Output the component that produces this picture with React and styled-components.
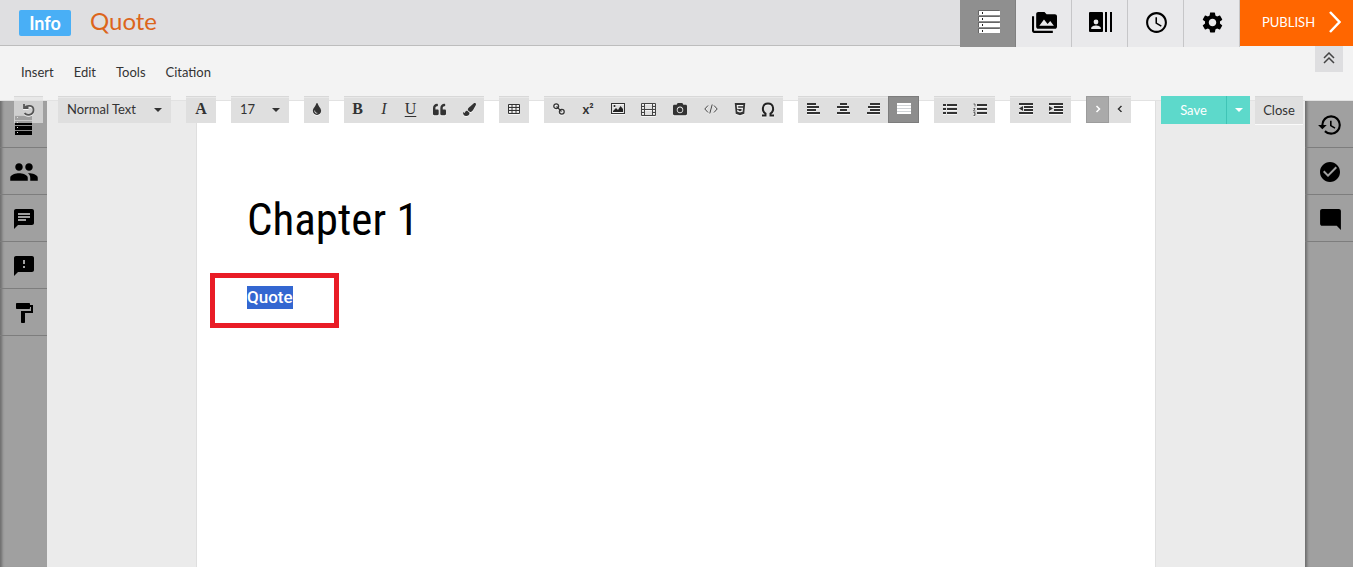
import React from "react";
import styled, { createGlobalStyle, css } from "styled-components";
import {
  MdPermMedia,
  MdAccessTime,
  MdSettings,
  MdPeople,
  MdChat,
  MdFeedback,
  MdFormatPaint,
  MdHistory,
  MdCheckCircle,
  MdModeComment,
} from "react-icons/md";
import { FaQuoteLeft, FaPaintBrush, FaCamera, FaHtml5, FaTint } from "react-icons/fa";

const GlobalStyle = createGlobalStyle`
  *, *::before, *::after { box-sizing: border-box; }
  body { margin: 0; font-family: Lato, "Liberation Sans", sans-serif; color: #333; background: #ebebeb; }
  button, select { font-family: inherit; color: inherit; border: 0; border-radius: 0; margin: 0; padding: 0; cursor: pointer; }
  svg { display: block; flex: none; }
`;

const Shell = styled.div`
  display: flex;
  flex-direction: column;
  min-height: 100vh;
`;

const Header = styled.header`
  position: relative;
  z-index: 1;
  display: flex;
  align-items: center;
  height: 46px;
  padding-left: 19px;
  background: #dfdfe1;
  border-bottom: 1px solid #bdbdbd;
`;

const Badge = styled.span`
  width: 52px;
  height: 26px;
  border-radius: 2px;
  background: #49aff6;
  color: #fff;
  font-size: 18px;
  font-weight: 700;
  line-height: 27px;
  text-align: center;
`;

const Title = styled.h1`
  margin: 0 auto 0 19px;
  padding-bottom: 3px;
  color: #dc651b;
  font-size: 24px;
  font-weight: 400;
  line-height: 28px;
`;

const Tabs = styled.nav`
  display: flex;
  align-self: flex-start;
`;

const Tab = styled.button`
  display: flex;
  align-items: center;
  justify-content: center;
  width: 56px;
  height: 47px;
  padding: 0 0 3px 2px;
  background: ${(p) => (p.$active ? "#8f8f8f" : "#e9e9eb")};
  color: #000;
  border-right: 1px solid ${(p) => (p.$active ? "#808080" : "#c6c6c8")};
`;

const Publish = styled.button`
  display: flex;
  align-items: center;
  justify-content: space-between;
  width: 113px;
  height: 46px;
  padding: 0 12px 3px 22px;
  background: #ff6600;
  color: #fff;
  font-size: 13px;
`;

const MenuBar = styled.div`
  display: flex;
  justify-content: space-between;
  height: 55px;
  padding: 0 10px 0 21px;
  background: #f3f3f3;
  border-bottom: 1px solid #e2e2e2;
`;

const Menus = styled.nav`
  display: flex;
  align-items: center;
  gap: 20px;
  padding-bottom: 2px;
`;

const MenuLink = styled.a`
  color: #333;
  font-size: 13px;
  line-height: 16px;
  text-decoration: none;
`;

const Collapse = styled.button`
  display: flex;
  align-items: center;
  justify-content: center;
  width: 28px;
  height: 26px;
  padding-bottom: 2px;
  background: #dedee0;
`;

const Body = styled.div`
  position: relative;
  display: flex;
  flex: 1;
`;

const Rail = styled.aside`
  flex: none;
  width: ${(p) => (p.$right ? 48 : 47)}px;
  background: #a0a0a0;
  box-shadow: inset 4px 0 3px -2px #6c6c6c;
`;

const RailButton = styled.button`
  display: flex;
  align-items: center;
  justify-content: center;
  width: 100%;
  height: 47px;
  padding: ${(p) => (p.$right ? "2px 0 0 2px" : "2px 0 0 1px")};
  background: transparent;
  color: #000;
  border-bottom: 1px solid #7d7d7d;
`;

const Canvas = styled.main`
  display: flex;
  justify-content: center;
  flex: 1;
  padding: 0 149px;
  background: #ebebeb;
`;

const Page = styled.article`
  flex: 1;
  padding-top: 91px;
  background: #fff;
  border: solid #dfdfdf;
  border-width: 0 1px;
  font-family: Roboto, "Liberation Sans", sans-serif;
`;

const Chapter = styled.h2`
  margin: 0 50px 25px;
  color: #000;
  font-family: "Roboto Condensed", "Liberation Sans Narrow", Roboto, sans-serif;
  font-size: 45px;
  font-weight: 400;
  line-height: 56px;
`;

const Callout = styled.div`
  width: 129px;
  height: 55px;
  margin-left: 13px;
  padding: 8px 32px;
  border: 5px solid #e91c26;
`;

const Selected = styled.span`
  display: inline-block;
  background: #3367d1;
  color: #fff;
  font-size: 17px;
  font-weight: 500;
  line-height: 23px;
`;

const Toolbar = styled.div`
  position: absolute;
  top: -5px;
  left: 14px;
  right: 50px;
  display: flex;
  gap: 15px;
`;

const Group = styled.div`
  display: flex;
  height: 27px;
  background: ${(p) => (p.$faded ? "rgba(226, 226, 226, 0.7)" : "#dfdfdf")};
  box-shadow: inset 0 1px #d8d8d8, inset 0 2px #e8e8e8;
`;

const activeTool = css`
  background: ${(p) => (p.$active === "light" ? "#aaaaaa" : "#8d8d8d")};
  box-shadow: inset 0 0 0 1px ${(p) => (p.$active === "light" ? "#9c9c9c" : "#7c7c7c")};
  color: #fff;
`;

const Tool = styled.button`
  display: flex;
  align-items: center;
  justify-content: center;
  width: ${(p) => p.$w || 30}px;
  height: 27px;
  padding-bottom: 1px;
  background: transparent;
  color: #333;
  ${(p) => p.$active && activeTool}
  svg { filter: ${(p) => (p.$active ? "none" : "drop-shadow(0 1px 0 #f4f4f4)")}; }
`;

const Letter = styled.span`
  font-family: "Liberation Serif", serif;
  font-size: 16px;
  font-weight: ${(p) => (p.$bold ? 700 : 400)};
  font-style: ${(p) => (p.$italic ? "italic" : "normal")};
  text-decoration: ${(p) => (p.$underline ? "underline" : "none")};
  text-underline-offset: 2px;
  line-height: 26px;
`;

const Script = styled.span`
  font-size: 13px;
  font-weight: 700;
  line-height: 26px;
`;

const SelectBox = styled.label`
  display: grid;
  align-items: center;
  width: ${(p) => p.$w}px;
  select, svg { grid-area: 1 / 1; }
  svg { justify-self: end; margin-right: 9px; pointer-events: none; }
`;

const Select = styled.select`
  appearance: none;
  width: 100%;
  height: 27px;
  padding: 0 0 2px 9px;
  background: transparent;
  font-size: 13px;
  outline: 0;
`;

const Actions = styled.div`
  display: flex;
  gap: 5px;
  margin-left: auto;
`;

const Split = styled.div`
  display: flex;
`;

const Save = styled.button`
  display: flex;
  align-items: center;
  justify-content: center;
  width: ${(p) => p.$w}px;
  height: 28px;
  background: #5dd9cb;
  border-right: ${(p) => (p.$divided ? "1px solid #40c4b6" : "0")};
  color: #fff;
  font-size: 13px;
`;

const Close = styled.button`
  width: 48px;
  height: 28px;
  background: #dfdfdf;
  box-shadow: inset 0 1px #d8d8d8, 0 1px #fafafa;
  color: #333;
  font-size: 13px;
`;

const Caret = () => (
  <svg width="8" height="4" viewBox="0 0 8 4"><path d="M0 0h8L4 4z" fill="currentColor" /></svg>
);

/* Stack of rack units, each with a small lamp at its left. */
const Rack = ({ light }) => (
  <svg width={light ? 22 : 18} height={light ? 24 : 20} viewBox={light ? "0 0 22 24" : "0 0 18 20"}>
    {[0, 1, 2, 3].map((i) =>
      light ? (
        <g key={i}>
          <path d={`M1 ${i * 6 + 1}h21v4H1z`} fill="#fff" />
          <path d={`M0.500 ${i * 6 + 5}V${i * 6 + 0.5}h21`} stroke="#666" fill="none" />
          <path d={`M4 ${i * 6 + 2}h1v2H4z`} fill="#222" />
        </g>
      ) : (
        <g key={i}>
          <path d={`M0 ${i * 5 + 1}h17v4H0z`} fill="#000" />
          <path d={`M0 ${i * 5 + 0}h17v1H0z`} fill="#8c8c8c" />
          <path d={`M2 ${i * 5 + 2}h1v1H2z`} fill="#ddd" />
        </g>
      )
    )}
  </svg>
);

const Contacts = () => (
  <svg width="23" height="20" viewBox="0 0 23 20">
    <path d="M1 0h12a1 1 0 0 1 1 1v18a1 1 0 0 1-1 1H1a1 1 0 0 1-1-1V1a1 1 0 0 1 1-1zM16 0h2v20h-2zM21 0h2v20h-2z" fill="#000" />
    <circle cx="7" cy="10" r="2.400" fill="#e9e9eb" />
    <path d="M2.200 17v-1c0-1.700 3-2.600 4.800-2.600s4.800.9 4.800 2.600v1z" fill="#e9e9eb" />
  </svg>
);

const Lines = ({ rows, light }) => (
  <svg width="14" height="12" viewBox="0 0 14 12" fill="currentColor">
    {light && <rect width="14" height="11" fill="#cfd3d6" />}
    {rows.map(([x, w], i) => (
      <rect key={i} x={x} y={i * 3} width={w} height="2" />
    ))}
  </svg>
);

const Undo = () => (
  <svg width="13" height="13" viewBox="0 0 13 13" fill="none" stroke="#555" strokeWidth="1.800">
    <path d="M2 1v4h4.500M2.500 4.800C5 1.800 11.500 2 11.500 7c0 5-6.500 6-9 3.200" />
  </svg>
);

const GridIcon = () => (
  <svg width="12" height="10" viewBox="0 0 12 10" fill="none" stroke="#333">
    <path d="M.5.500h11v9H.5zM.5 3.500h11M.5 6.500h11M4 .5v9M8 .5v9" />
  </svg>
);

const LinkIcon = () => (
  <svg width="12" height="12" viewBox="0 0 12 12" fill="none" stroke="#333" strokeWidth="1.300">
    <circle cx="3.200" cy="3.200" r="2.400" />
    <circle cx="8.800" cy="8.800" r="2.400" />
    <path d="M3.500 3.500l5 5" />
  </svg>
);

const PictureIcon = () => (
  <svg width="14" height="12" viewBox="0 0 14 12">
    <rect x=".5" y=".5" width="13" height="10" fill="none" stroke="#333" />
    <path d="M2 9V8l3-3 2 2 2.500-4L12 6v3z" fill="#222" />
    <circle cx="3.500" cy="3" r="1" fill="#222" />
  </svg>
);

const FilmIcon = () => (
  <svg width="15" height="13" viewBox="0 0 15 13" fill="none" stroke="#444">
    <path d="M.5.500h14v12H.5zM3.500.5v12M11.500.5v12M3.500 6.500h8M.5 3.500h3M.5 6.500h3M.5 9.500h3M11.500 3.500h3M11.500 6.500h3M11.500 9.500h3" />
  </svg>
);

const CodeIcon = () => (
  <svg width="14" height="10" viewBox="0 0 14 10" fill="none" stroke="#444">
    <path d="M4 1.500L.8 5 4 8.500M10 1.500L13.200 5 10 8.500M8.200.5L5.800 9.500" />
  </svg>
);

const OmegaIcon = () => (
  <svg width="14" height="15" viewBox="0 0 14 15" fill="none" stroke="#222" strokeWidth="2">
    <path d="M1 13.500h3.500v-2C.5 9 1 1.500 7 1.500S13.500 9 9.500 11.500v2H13" />
  </svg>
);

const ListIcon = ({ numbered }) => (
  <svg width="14" height="13" viewBox="0 0 14 13" fill="#333">
    <path d="M4 1h10v2H4zM4 5h10v2H4zM4 9h10v2H4z" />
    {numbered ? (
      <path d="M.5 1H2v2.500M.5 5.500h1.500L.5 8h2M.5 9.500H2v3H.5M1 11h1" fill="none" stroke="#444" strokeWidth=".8" />
    ) : (
      <path d="M0 1h3v2H0zM0 5h3v2H0zM0 9h3v2H0z" />
    )}
  </svg>
);

const IndentIcon = ({ inward }) => (
  <svg width="14" height="12" viewBox="0 0 14 12" fill="#333">
    <path d="M0 0h14v2H0zM5 3h9v2H5zM5 6h9v2H5zM0 9h14v2H0z" />
    <path d={inward ? "M0 3l4 2.500L0 8z" : "M4 3v5L0 5.500z"} />
  </svg>
);

const Angle = ({ left }) => (
  <svg width="6" height="8" viewBox="0 0 6 8" fill="none" stroke="currentColor" strokeWidth="1.500">
    <path d={left ? "M4.500 1l-3 3 3 3" : "M1.500 1l3 3-3 3"} />
  </svg>
);

const leftRail = [
  ["Outline", <Rack />],
  ["Collaborators", <MdPeople size={30} />],
  ["Messages", <MdChat size={24} />],
  ["Feedback", <MdFeedback size={24} />],
  ["Theme", <MdFormatPaint size={24} />],
];

const rightRail = [
  ["History", <MdHistory size={26} />],
  ["Reviews", <MdCheckCircle size={24} />],
  ["Comments", <MdModeComment size={25} />],
];

const tabs = [
  ["Content", <Rack light />],
  ["Media", <MdPermMedia size={25} />],
  ["Contacts", <Contacts />],
  ["Schedule", <MdAccessTime size={25} />],
  ["Settings", <MdSettings size={25} />],
];

export default function App() {
  return (
    <Shell>
      <GlobalStyle />
      <Header>
        <Badge>Info</Badge>
        <Title>Quote</Title>
        <Tabs>
          {tabs.map(([label, icon], i) => (
            <Tab key={label} aria-label={label} $active={i === 0}>{icon}</Tab>
          ))}
          <Publish>
            PUBLISH
            <svg width="12" height="22" viewBox="0 0 12 22" fill="none" stroke="#fff" strokeWidth="2.500">
              <path d="M1 1l9.500 10L1 21" />
            </svg>
          </Publish>
        </Tabs>
      </Header>
      <MenuBar>
        <Menus>
          {["Insert", "Edit", "Tools", "Citation"].map((m) => (
            <MenuLink key={m} href="#">{m}</MenuLink>
          ))}
        </Menus>
        <Collapse aria-label="Collapse menu">
          <svg width="12" height="12" viewBox="0 0 12 12" fill="none" stroke="#444" strokeWidth="1.500">
            <path d="M1 6l5-5 5 5M1 11l5-5 5 5" />
          </svg>
        </Collapse>
      </MenuBar>
      <Body>
        <Rail>
          {leftRail.map(([label, icon]) => (
            <RailButton key={label} aria-label={label}>{icon}</RailButton>
          ))}
        </Rail>
        <Canvas>
          <Page>
            <Chapter>Chapter 1</Chapter>
            <Callout><Selected>Quote</Selected></Callout>
          </Page>
        </Canvas>
        <Rail $right>
          {rightRail.map(([label, icon]) => (
            <RailButton key={label} aria-label={label} $right>{icon}</RailButton>
          ))}
        </Rail>
        <Toolbar>
          <Group $faded><Tool $w={29} aria-label="Undo"><Undo /></Tool></Group>
          <Group>
            <SelectBox $w={113}>
              <Select aria-label="Text style" defaultValue="Normal Text"><option>Normal Text</option></Select>
              <Caret />
            </SelectBox>
          </Group>
          <Group><Tool aria-label="Font"><Letter $bold>A</Letter></Tool></Group>
          <Group>
            <SelectBox $w={58}>
              <Select aria-label="Font size" defaultValue="17"><option>17</option></Select>
              <Caret />
            </SelectBox>
          </Group>
          <Group><Tool $w={25} aria-label="Text color"><FaTint size={12} /></Tool></Group>
          <Group>
            <Tool $w={27} aria-label="Bold"><Letter $bold>B</Letter></Tool>
            <Tool $w={26} aria-label="Italic"><Letter $italic>I</Letter></Tool>
            <Tool $w={27} aria-label="Underline"><Letter $underline>U</Letter></Tool>
            <Tool aria-label="Quotation"><FaQuoteLeft size={13} /></Tool>
            <Tool aria-label="Brush"><FaPaintBrush size={13} /></Tool>
          </Group>
          <Group><Tool aria-label="Table"><GridIcon /></Tool></Group>
          <Group>
            <Tool aria-label="Link"><LinkIcon /></Tool>
            <Tool $w={28} aria-label="Superscript"><Script>x²</Script></Tool>
            <Tool $w={31} aria-label="Image"><PictureIcon /></Tool>
            <Tool $w={31} aria-label="Video"><FilmIcon /></Tool>
            <Tool $w={31} aria-label="Camera"><FaCamera size={14} /></Tool>
            <Tool $w={31} aria-label="Code"><CodeIcon /></Tool>
            <Tool $w={27} aria-label="HTML"><FaHtml5 size={14} /></Tool>
            <Tool aria-label="Symbol"><OmegaIcon /></Tool>
          </Group>
          <Group>
            <Tool aria-label="Align left"><Lines rows={[[1, 9], [1, 12], [1, 9], [1, 13]]} /></Tool>
            <Tool aria-label="Align center"><Lines rows={[[4, 7], [1, 12], [4, 7], [1, 13]]} /></Tool>
            <Tool aria-label="Align right"><Lines rows={[[4, 10], [2, 12], [4, 10], [1, 13]]} /></Tool>
            <Tool $w={31} $active="dark" aria-label="Justify"><Lines light rows={[[0, 14], [0, 14], [0, 14], [0, 14]]} /></Tool>
          </Group>
          <Group>
            <Tool $w={31} aria-label="Bulleted list"><ListIcon /></Tool>
            <Tool aria-label="Numbered list"><ListIcon numbered /></Tool>
          </Group>
          <Group>
            <Tool $w={31} aria-label="Outdent"><IndentIcon /></Tool>
            <Tool aria-label="Indent"><IndentIcon inward /></Tool>
          </Group>
          <Group>
            <Tool $w={23} $active="light" aria-label="Left to right"><Angle /></Tool>
            <Tool $w={22} aria-label="Right to left"><Angle left /></Tool>
          </Group>
          <Actions>
            <Split>
              <Save $w={66} $divided>Save</Save>
              <Save $w={23} aria-label="Save options"><Caret /></Save>
            </Split>
            <Close>Close</Close>
          </Actions>
        </Toolbar>
      </Body>
    </Shell>
  );
}
